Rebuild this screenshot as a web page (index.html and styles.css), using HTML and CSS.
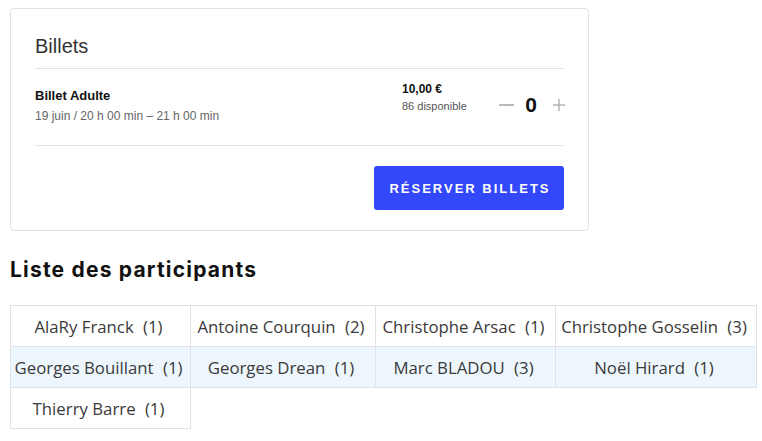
FILE: index.html
```html
<!DOCTYPE html>
<html lang="fr">
<head>
<meta charset="utf-8">
<title>Billets</title>
<link rel="stylesheet" href="styles.css">
</head>
<body>
<div class="page">
  <section class="card">
    <h2 class="card-title">Billets</h2>
    <div class="ticket">
      <div class="ticket-info">
        <div class="ticket-name">Billet Adulte</div>
        <div class="ticket-date">19 juin / 20 h 00 min – 21 h 00 min</div>
      </div>
      <div class="ticket-price">
        <div class="price">10,00 €</div>
        <div class="avail">86 disponible</div>
      </div>
      <div class="qty">
        <svg class="qty-btn" width="16" height="16" viewBox="0 0 16 16" aria-label="moins"><line x1="1" y1="8" x2="16" y2="8" stroke="#b8b8b8" stroke-width="2"/></svg>
        <span class="qty-val">0</span>
        <svg class="qty-btn plus" width="14" height="14" viewBox="0 0 14 14" aria-label="plus"><line x1="1" y1="7" x2="13" y2="7" stroke="#b8b8b8" stroke-width="1.6"/><line x1="7" y1="1" x2="7" y2="13" stroke="#b8b8b8" stroke-width="1.6"/></svg>
      </div>
    </div>
    <div class="actions">
      <button class="reserve">RÉSERVER BILLETS</button>
    </div>
  </section>

  <h2 class="list-title">Liste des participants</h2>
  <table class="participants">
    <colgroup>
      <col class="c1"><col class="c2"><col class="c3"><col class="c4">
    </colgroup>
    <tbody>
      <tr>
        <td>AlaRy Franck <span class="n">(1)</span></td>
        <td>Antoine Courquin <span class="n">(2)</span></td>
        <td>Christophe Arsac <span class="n">(1)</span></td>
        <td>Christophe Gosselin <span class="n">(3)</span></td>
      </tr>
      <tr class="alt">
        <td>Georges Bouillant <span class="n">(1)</span></td>
        <td>Georges Drean <span class="n">(1)</span></td>
        <td>Marc BLADOU <span class="n">(3)</span></td>
        <td>Noël Hirard <span class="n">(1)</span></td>
      </tr>
      <tr>
        <td>Thierry Barre <span class="n">(1)</span></td>
      </tr>
    </tbody>
  </table>
</div>
</body>
</html>
```

FILE: styles.css
```css
html, body {
  margin: 0;
  padding: 0;
  background: #ffffff;
}

.page {
  padding: 8px 0 0 10px;
  font-family: "Liberation Sans", Arial, sans-serif;
  color: #222;
}

.card {
  box-sizing: border-box;
  width: 579px;
  border: 1px solid #e2e2e2;
  border-radius: 4px;
  padding: 25px 24px 20px;
}

.card-title {
  margin: 0;
  font-weight: normal;
  font-size: 20px;
  line-height: 24px;
  color: #333;
  padding-bottom: 10px;
  border-bottom: 1px solid #e3e3e3;
}

.ticket {
  display: flex;
  align-items: flex-start;
  padding: 19px 0 21px;
  border-bottom: 1px solid #e3e3e3;
}

.ticket-info {
  flex: 1;
}

.ticket-name {
  font-weight: bold;
  font-size: 13px;
  line-height: 16px;
  color: #111;
}

.ticket-date {
  margin-top: 4px;
  font-size: 12px;
  line-height: 16px;
  color: #666;
}

.ticket-price {
  width: 96px;
  margin-top: -6px;
}

.price {
  font-weight: bold;
  font-size: 12px;
  line-height: 14px;
  color: #111;
}

.avail {
  margin-top: 3px;
  font-size: 11px;
  line-height: 14px;
  color: #555;
}

.qty {
  display: flex;
  align-items: center;
  margin: 2px -2px 0 0;
  height: 30px;
}

.qty-btn {
  display: block;
}

.qty-btn.plus {
  margin-left: 4px;
}

.qty-val {
  font-weight: bold;
  font-size: 21px;
  line-height: 30px;
  color: #111;
  width: 34px;
  text-align: center;
}

.actions {
  display: flex;
  justify-content: flex-end;
  padding-top: 20px;
}

.reserve {
  width: 190px;
  height: 44px;
  border: none;
  border-radius: 3px;
  background: #3347fb;
  color: #fff;
  font-family: "Liberation Sans", Arial, sans-serif;
  font-weight: bold;
  font-size: 13px;
  letter-spacing: 2px;
  padding: 0 0 0 2px;
}

.list-title {
  margin: 26px 0 22px;
  font-family: Inter, "Liberation Sans", sans-serif;
  font-weight: 700;
  font-size: 21px;
  line-height: 26px;
  letter-spacing: 1.2px;
  color: #111;
}

.participants {
  border-collapse: collapse;
  table-layout: fixed;
  font-family: "Open Sans", sans-serif;
  font-size: 16.8px;
  color: #3a3a3a;
}

.c1 { width: 180px; }
.c2 { width: 185px; }
.c3 { width: 180px; }
.c4 { width: 201px; }

.participants td {
  border: 1px solid #dfe3e8;
  height: 40px;
  padding: 0 4px 0 0;
  text-align: center;
  white-space: nowrap;
}

.participants tr.alt td {
  background: #eef6fd;
}

.n {
  margin-left: 5px;
}
```
